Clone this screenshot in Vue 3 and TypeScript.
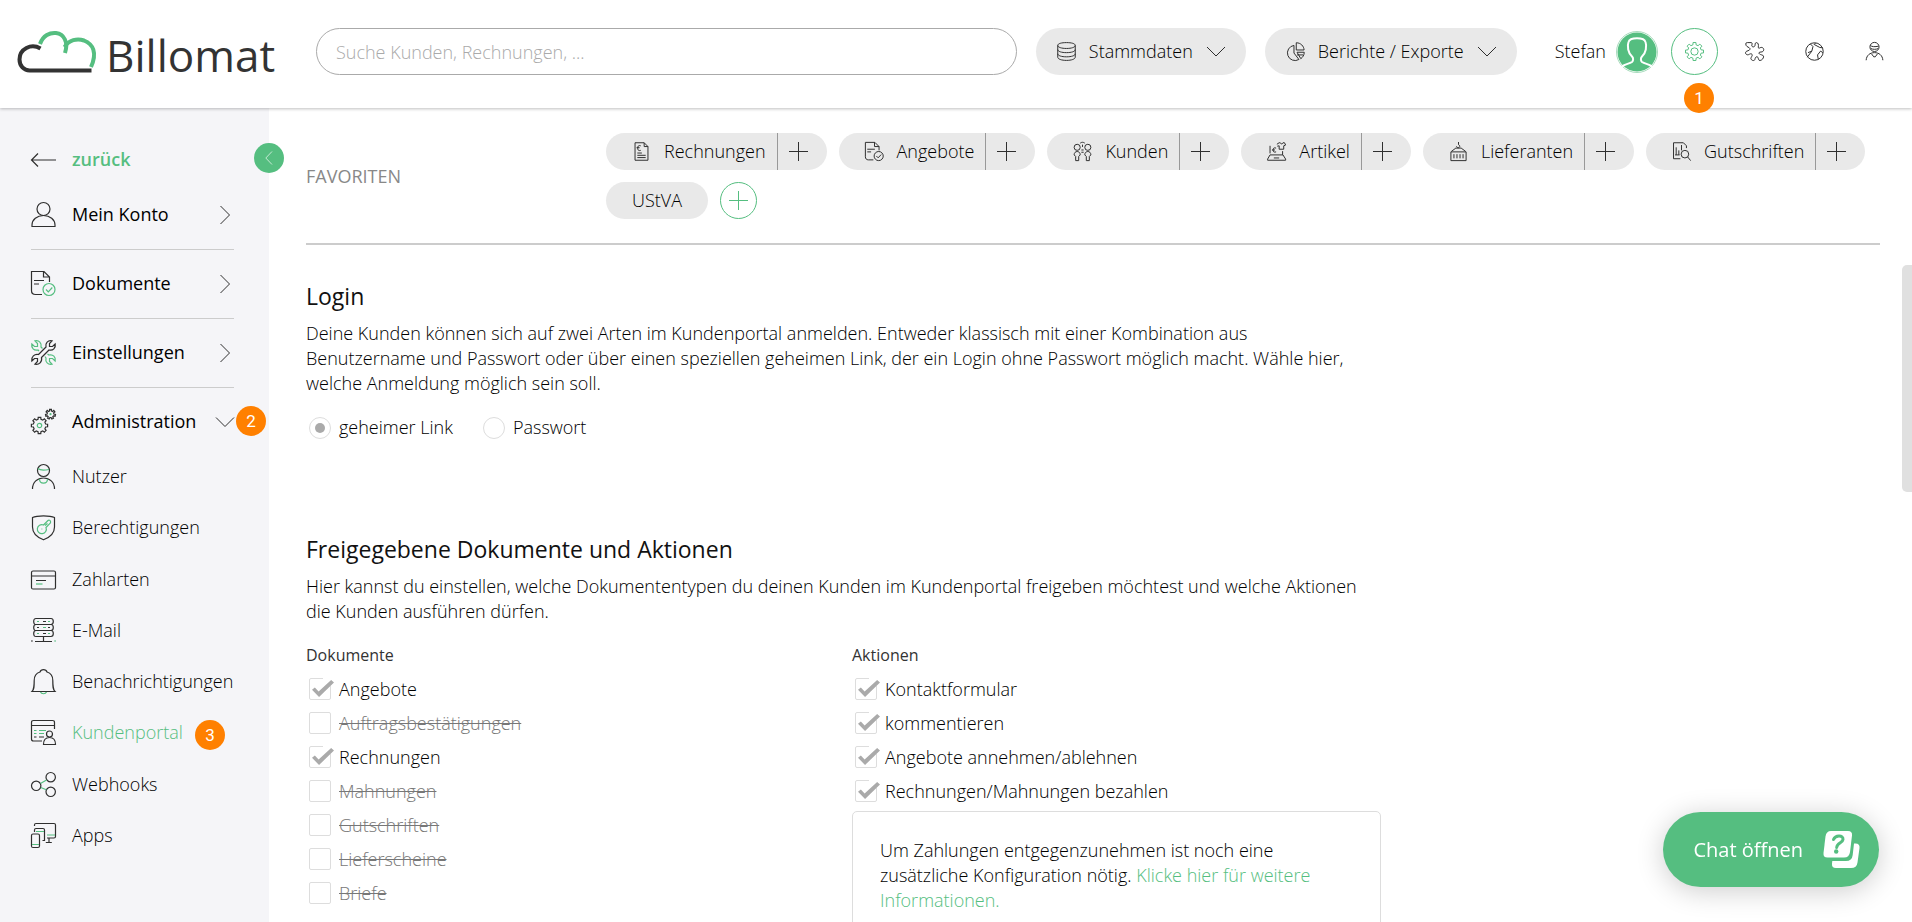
<script setup lang="ts">
import { ref } from 'vue'

interface Stroke {
  d: string
  accent?: boolean
}

interface NavItem {
  label: string
  icon: string
  marker?: number
}

/** Closed outline of a cog wheel around (cx, cy). */
function gear(cx: number, cy: number, inner: number, outer: number, teeth: number): string {
  const step = (Math.PI * 2) / teeth
  const at = (r: number, a: number) =>
    `${(cx + r * Math.sin(a)).toFixed(2)} ${(cy - r * Math.cos(a)).toFixed(2)}`
  const parts: string[] = []
  for (let i = 0; i < teeth; i++) {
    const a = i * step
    parts.push(
      `${i ? 'L' : 'M'}${at(outer, a - step * 0.2)}`,
      `L${at(outer, a + step * 0.2)}`,
      `L${at(inner, a + step * 0.3)}`,
      `L${at(inner, a + step * 0.7)}`,
    )
  }
  return parts.join('') + 'Z'
}

function circle(cx: number, cy: number, r: number): string {
  return `M${cx - r} ${cy}a${r} ${r} 0 1 0 ${2 * r} 0a${r} ${r} 0 1 0 ${-2 * r} 0Z`
}

const icons: Record<string, Stroke[]> = {
  back: [{ d: 'M.5 13H25M7 6.5.5 13 7 19.5' }],
  user: [
    { d: circle(12.5, 7, 6.5) },
    { d: 'M1 24.5v-1.5c0-5.500 5-9.500 11.500-9.500s11.500 4 11.500 9.500v1.500z' },
  ],
  docCheck: [
    { d: 'M18.500 11V6L13 .5H.5v19c0 2.500 1.500 4 4 4h6.500M12.500.5v5.500h6M3 9.500h10M3 13h5' },
    { d: circle(18, 18.5, 6) + 'M15 18.500l2.300 2.300 4-4.300', accent: true },
  ],
  tools: [
    { d: 'M7.500 14.500 15 7C14 3 17 0 21 .8L18.500 3.500v3h3L24.200 4C25 8 22 11 18 10l-7.500 7.500C11.500 22 8 25 4 24.200L6.500 21.500v-3h-3L.8 21C0 17 3.500 13.500 7.500 14.500Z' },
    { d: 'M8 11 7 10C3 11 0 8 .8 4l2.700 2.500h3v-3L4 .8C8 0 11 3 10 7l1.500 1.500', accent: true },
    { d: 'M16.500 14l1.500 1c4-1 7 2 6.200 6l-2.700-2.500h-3v3l2.500 2.700C17 25 14 22 15 18l-1-1.500', accent: true },
  ],
  gears: [
    { d: gear(8.5, 16.5, 6.3, 8.2, 8) + gear(19.5, 5.2, 3.4, 5, 7) },
    { d: circle(8.5, 16.5, 2.2) + circle(19.5, 5.2, 0.5), accent: true },
  ],
  person: [
    { d: circle(12.5, 6.5, 6) + 'M1.500 25c0-7 5-11 11-11s11 4 11 11' },
    { d: 'M7 4.500c2 2 6 2 11 1M8.500 15c0 5.500 8 5.500 8 0', accent: true },
  ],
  shield: [
    { d: 'M1.500 2.500C6 .3 19 .3 23.500 2.500V12c0 7-5 10.500-11 12.800C6.500 22.500 1.500 19 1.500 12Z' },
    { d: 'M12.500 10 17 5.500c.8-.8 2.500-.2 2.500.8v1.500L15 12.500a4.500 4.500 0 1 1-2.500-2.500ZM10.500 14h.8M14 10.500l2.500-2', accent: true },
  ],
  card: [
    { d: 'M2 4h21q1.500 0 1.500 1.500v15q0 1.500-1.500 1.500H2Q.5 22 .5 20.500v-15Q.5 4 2 4ZM.5 9h24M5 13.500h10' },
    { d: 'M5 17h6.500', accent: true },
  ],
  server: [
    { d: 'M5 .5h15q2.300 0 2.300 3t-2.300 3H5q-2.300 0-2.300-3T5 .5ZM5 6.500h15q2.300 0 2.300 3t-2.300 3H5q-2.300 0-2.300-3t2.300-3ZM5 12.500h15q2.300 0 2.300 3t-2.300 3H5q-2.300 0-2.300-3t2.300-3ZM12.500 18.500v5M4 23.500h17M0 23h1.800M12 3.500h3M6 9.500h2M17 9.500h2M12 15.500h3' },
    { d: 'M6 3.500h2M17 3.500h2M12 9.500h3M6 15.500h2M17 15.500h2M23.200 23H25', accent: true },
  ],
  bell: [
    { d: 'M1 22.500h23c-2-2-2.200-4-2.200-11 0-4.500-2.300-7.500-5.800-8.500C15-.2 10-.2 9 3 5.500 4 3.200 7 3.200 11.500c0 7-.2 9-2.200 11Z' },
    { d: 'M9.500 23c1 2.300 5 2.300 6 0', accent: true },
  ],
  portal: [
    { d: 'M23.500 9V2.500q0-2-2-2h-19q-2 0-2 2V19q0 2 2 2H11M.5 5.500h23M3 17h2.500M8 17h5' + circle(18.5, 14, 3) + 'M12.500 24.500c0-4.500 2.500-7 6-7s6 2.500 6 7Z' },
    { d: 'M3 10.500h2.500M8 10.500h7M3 13.500h2.500M8 13.500h5', accent: true },
  ],
  hooks: [
    { d: circle(5.2, 13.8, 4.7) + circle(19.7, 5.2, 4.7) + circle(19.7, 19.8, 4.7) },
    { d: 'M9.500 11.500l6-3.500M9.800 15.500l5.500 2.300', accent: true },
  ],
  apps: [
    { d: 'M3.500 3V2q0-1.500 1.500-1.500h18q1.500 0 1.500 1.500v11.500q0 1.500-1.500 1.500h-7M18 15v4.500M14.800 19.500h6M3.500 9V7q0-1.500 1.500-1.500h7q1.500 0 1.500 1.500v10.500h-2M2 11h5q1.500 0 1.500 1.500V23q0 1.500-1.500 1.500H2Q.5 24.500.5 23V12.500Q.5 11 2 11Z' },
    { d: 'M5 8.500h8M16 12h8M1 21.500h7', accent: true },
  ],
  database: [
    { d: 'M1 4.500C1 2 6 .8 12.500.8S24 2 24 4.500 19 8.500 12.500 8.500 1 7 1 4.500ZV20c0 2.500 5 4.200 11.500 4.200S24 22.500 24 20V4.500M1 10c0 2.500 5 4 11.500 4S24 12.500 24 10M1 15.500c0 2.500 5 4 11.500 4S24 18 24 15.500' },
  ],
  pie: [
    { d: 'M10.500 4.500A10 10 0 1 0 17 23l-6.500-8.500ZM13.500 1c6 0 10 4.500 10.300 9.500H13.500ZM14.500 13.500h9.500c0 4-2 6.500-4.500 8.500ZM14.500 17h8' },
  ],
  puzzle: [
    { d: 'M1 2.500Q1 .8 3 .8H8C9.800.8 9.500 2.500 9 4 8.300 6.500 12 7.500 13 5 13.500 3.500 13 .8 15 .8c2.500 0 3 3 2.500 5.700-.2 2 1 2 2.500 1 3-1.500 6 1.500 4 4.500-1.500 2-4.500.5-5.500 2-.7 1.500 1.500 2.500 3.500 3 2.500.5 3 2 2 4-1 2.500-4 4-5.500 3-1.500-1.500-.5-4-2.500-4.500-2.500-.5-2.500 2-3 3.500-.5 1.800-3 1.800-4.500.3-2-1.500.5-3.800 1-5.800.3-2-2-2.500-3.500-1.500-1.500 1-3.500 1.500-5-.5-1-2 .5-3.500 3-4C6.500 11 7.500 8.500 5.500 7.500 3.500 6.500 1 5.500 1 2.500Z' },
  ],
  ball: [
    { d: circle(12.5, 12.5, 11.5) + 'M7 2.500 10.500 6 9 12l-6 8M4 14l5-2M14 1.200l-2 2 7.500 4 4 .5M23.500 14l-3-2-4 5 1 6' },
  ],
  headband: [
    { d: circle(12.5, 6.5, 6) + 'M7 4.500c2 2 6 2 11 1M7.500 8.500c3 1.500 7 1.500 10 0M1.500 24c.5-6.500 5-10 11-10s10.500 3.500 11 10M8.500 15.500l3 4h2l3-4' },
  ],
  cog: [{ d: gear(12.5, 12.5, 9, 12, 8) + circle(12.5, 12.5, 4.8) }],
  invoice: [
    { d: 'M4 1h12l5 5v18H4ZM16 1v5h5M11.500 5C8.500 4 7.500 5.500 7.500 8s1 4 4 3M6 7.500h4M7 14.500h6M7 17.500h11M7 20.500h11' },
  ],
  people: [
    { d: circle(5.5, 7, 4) + circle(19.5, 7, 4) + 'M1.500 17c0-6 8-6 8 0l-2 2v5.500h-4V19ZM15.500 17c0-6 8-6 8 0l-2 2v5.500h-4V19ZM9.500 1.500c2-1.500 4-1.500 6 0M12.500 3.500v3M11 10.500h3M14 13.500h-3' },
  ],
  article: [
    { d: 'M4 15V5M4 17h17l3.500 5.500V24H.8v-1.500ZM9 21h7M12 8c-3-1-4 .5-4 2.500s1 3.500 4 2.500M6.500 10.500h4M13 3l3-2h1.500c.5 2 3 2 3.500 0H23l1.500 3-2.500 1v4.500h-6V5l-2.500.5M20.500 17v-5' },
  ],
  crate: [
    { d: 'M2.500 13h20v11.500h-20ZM6.500 16v5.500M10.500 16v5.500M14.500 16v5.500M18.500 16v5.500M3 12.500l6-4.500h7l6 4.500M12.500 0v3.500c2.500 1 2 4-.5 4-1.200 0-2-.8-2-2' },
  ],
  credit: [
    { d: 'M19 8V5l-4-4H2v21h9M5.500 7v10M9 11v6M12.500 4v7M4 17h6' + circle(17, 16, 5) + 'M20.500 19.500l4 5' },
  ],
}

const mainNav: NavItem[] = [
  { label: 'Mein Konto', icon: 'user' },
  { label: 'Dokumente', icon: 'docCheck' },
  { label: 'Einstellungen', icon: 'tools' },
  { label: 'Administration', icon: 'gears', marker: 2 },
]

const subNav: NavItem[] = [
  { label: 'Nutzer', icon: 'person' },
  { label: 'Berechtigungen', icon: 'shield' },
  { label: 'Zahlarten', icon: 'card' },
  { label: 'E-Mail', icon: 'server' },
  { label: 'Benachrichtigungen', icon: 'bell' },
  { label: 'Kundenportal', icon: 'portal', marker: 3 },
  { label: 'Webhooks', icon: 'hooks' },
  { label: 'Apps', icon: 'apps' },
]

const favourites: NavItem[] = [
  { label: 'Rechnungen', icon: 'invoice' },
  { label: 'Angebote', icon: 'docCheck' },
  { label: 'Kunden', icon: 'people' },
  { label: 'Artikel', icon: 'article' },
  { label: 'Lieferanten', icon: 'crate' },
  { label: 'Gutschriften', icon: 'credit' },
]

const headerMenus = [
  { label: 'Stammdaten', icon: 'database' },
  { label: 'Berichte / Exporte', icon: 'pie' },
]

const headerTools = [
  { label: 'Einstellungen', icon: 'cog', marker: 1 },
  { label: 'Erweiterungen', icon: 'puzzle' },
  { label: 'Neuigkeiten', icon: 'ball' },
  { label: 'Profil', icon: 'headband' },
]

const search = ref('')
const loginMode = ref('link')

const documents = ref([
  { label: 'Angebote', on: true },
  { label: 'Auftragsbestätigungen', on: false },
  { label: 'Rechnungen', on: true },
  { label: 'Mahnungen', on: false },
  { label: 'Gutschriften', on: false },
  { label: 'Lieferscheine', on: false },
  { label: 'Briefe', on: false },
])

const actions = ref([
  { label: 'Kontaktformular', on: true },
  { label: 'kommentieren', on: true },
  { label: 'Angebote annehmen/ablehnen', on: true },
  { label: 'Rechnungen/Mahnungen bezahlen', on: true },
])
</script>

<template>
  <div class="app">
    <header class="topbar">
      <a href="#" class="logo" aria-label="Billomat">
        <svg class="cloud" viewBox="0 0 80 44" fill="none" stroke-width="4">
          <path class="cloud-dark" d="M23.500 18.500C14 13 2.500 19 2.500 29.500 2.500 36 7 40.500 12.500 40.500H74.500" />
          <path class="cloud-green" d="M23 14C26 5.500 33 2.300 39 3c8 1 12.500 9 9 20" />
          <path class="cloud-green" d="M47.500 17C52 10 60 8 67 10.500c9 3.500 13.500 12 7 26.500" />
        </svg>
        <span class="logo-text">Billomat</span>
      </a>

      <input v-model="search" class="search" type="search" aria-label="Suche" placeholder="Suche Kunden, Rechnungen, ..." />

      <button v-for="menu in headerMenus" :key="menu.label" type="button" class="menu-pill">
        <svg class="icon-s" viewBox="0 0 25 25">
          <path v-for="(s, i) in icons[menu.icon]" :key="i" :d="s.d" />
        </svg>
        <span>{{ menu.label }}</span>
        <svg class="chevron-wide" viewBox="0 0 20 12"><path d="M1 1l9 9 9-9" /></svg>
      </button>

      <div class="account">
        <span>Stefan</span>
        <svg class="avatar" viewBox="0 0 42 42">
          <circle class="avatar-ring" cx="21" cy="21" r="20.5" />
          <circle class="avatar-disc" cx="21" cy="21" r="19.5" />
          <path class="avatar-line" d="M6 35.500c3-2.500 7-2.500 10-4.500 1.500-1.200 1.500-4 0-5.500C12 22 11 15 12.500 11 14 6 28 6 29.500 11c1.500 4 .5 11-3.500 14.500-1.500 1.500-1.500 4.300 0 5.500 3 2 7 2 10 4.500" />
        </svg>
      </div>

      <nav class="tools" aria-label="Werkzeuge">
        <button
          v-for="tool in headerTools"
          :key="tool.label"
          type="button"
          class="tool"
          :class="{ active: tool.marker }"
          :aria-label="tool.label"
        >
          <svg class="icon-s" viewBox="0 0 25 25">
            <path v-for="(s, i) in icons[tool.icon]" :key="i" :d="s.d" />
          </svg>
          <span v-if="tool.marker" class="marker marker-tool">{{ tool.marker }}</span>
        </button>
      </nav>
    </header>

    <div class="body">
      <aside class="sidebar">
        <button type="button" class="collapse" aria-label="Menü einklappen">
          <svg viewBox="0 0 8 14"><path d="M7 .5.800 7 7 13.500" /></svg>
        </button>

        <a href="#" class="nav-link back">
          <svg class="icon" viewBox="0 0 25 25"><path :d="icons.back[0].d" /></svg>
          <span>zurück</span>
        </a>

        <ul class="main-nav">
          <li v-for="item in mainNav" :key="item.label">
            <a href="#" class="nav-link">
              <svg class="icon" viewBox="0 0 25 25">
                <path v-for="(s, i) in icons[item.icon]" :key="i" :d="s.d" :class="{ accent: s.accent }" />
              </svg>
              <span>{{ item.label }}</span>
              <svg class="chevron" :class="{ open: item.marker }" viewBox="0 0 10 20"><path d="M.5 1l9 9-9 9" /></svg>
            </a>
            <span v-if="item.marker" class="marker marker-main">{{ item.marker }}</span>
          </li>
        </ul>

        <ul class="sub-nav">
          <li v-for="item in subNav" :key="item.label">
            <a href="#" class="nav-link" :class="{ current: item.marker }">
              <svg class="icon" viewBox="0 0 25 25">
                <path v-for="(s, i) in icons[item.icon]" :key="i" :d="s.d" :class="{ accent: s.accent }" />
              </svg>
              <span>{{ item.label }}</span>
            </a>
            <span v-if="item.marker" class="marker marker-sub">{{ item.marker }}</span>
          </li>
        </ul>
      </aside>

      <main class="content">
        <section class="favourites">
          <h2 class="fav-title">FAVORITEN</h2>
          <div class="fav-list">
            <div v-for="fav in favourites" :key="fav.label" class="fav">
              <a href="#" class="fav-link">
                <svg class="icon-s" viewBox="0 0 25 25">
                  <path v-for="(s, i) in icons[fav.icon]" :key="i" :d="s.d" />
                </svg>
                <span>{{ fav.label }}</span>
              </a>
              <button type="button" class="fav-add" :aria-label="fav.label + ' anlegen'">
                <svg viewBox="0 0 19 19"><path d="M9.500 0v19M0 9.500h19" /></svg>
              </button>
            </div>
            <div class="fav"><a href="#" class="fav-link plain">UStVA</a></div>
            <button type="button" class="fav-new" aria-label="Favorit hinzufügen">
              <svg viewBox="0 0 19 19"><path d="M9.500 0v19M0 9.500h19" /></svg>
            </button>
          </div>
        </section>

        <section class="block login">
          <h1>Login</h1>
          <p>
            Deine Kunden können sich auf zwei Arten im Kundenportal anmelden. Entweder klassisch mit einer
            Kombination aus Benutzername und Passwort oder über einen speziellen geheimen Link, der ein Login
            ohne Passwort möglich macht. Wähle hier, welche Anmeldung möglich sein soll.
          </p>
          <div class="radios">
            <label><input v-model="loginMode" type="radio" name="login" value="link" />geheimer Link</label>
            <label><input v-model="loginMode" type="radio" name="login" value="password" />Passwort</label>
          </div>
        </section>

        <section class="block">
          <h1>Freigegebene Dokumente und Aktionen</h1>
          <p>
            Hier kannst du einstellen, welche Dokumententypen du deinen Kunden im Kundenportal freigeben
            möchtest und welche Aktionen die Kunden ausführen dürfen.
          </p>
          <div class="columns">
            <fieldset>
              <legend>Dokumente</legend>
              <label v-for="doc in documents" :key="doc.label" class="check" :class="{ off: !doc.on }">
                <input v-model="doc.on" type="checkbox" /><span>{{ doc.label }}</span>
              </label>
            </fieldset>
            <fieldset>
              <legend>Aktionen</legend>
              <label v-for="act in actions" :key="act.label" class="check" :class="{ off: !act.on }">
                <input v-model="act.on" type="checkbox" /><span>{{ act.label }}</span>
              </label>
              <div class="notice">
                Um Zahlungen entgegenzunehmen ist noch eine zusätzliche Konfiguration nötig.
                <a href="#">Klicke hier für weitere Informationen.</a>
              </div>
            </fieldset>
          </div>
        </section>
        <div class="scroll-thumb"></div>
      </main>
    </div>

    <button type="button" class="chat">
      <span>Chat öffnen</span>
      <svg viewBox="0 0 38 38">
        <path class="chat-back" d="M31 12.500h1.500q4.500 0 4 4.500l-2 14.500q-.7 5.500-6.500 5.500H13q-4.500 0-4-4.500l.3-2.500H23q6 0 6.700-6Z" />
        <path class="chat-front" d="M8 0h17q4.500 0 4 4.500l-2 16.500q-.7 5.500-6 5.500H4.500Q0 26.500.500 22L2.500 5.500Q3.200 0 8 0Z" />
        <path class="chat-mark" d="M10.500 8.500C12.500 3.500 20.500 4 20 8.500c-.4 3.500-6 3-6.300 8" />
        <circle class="chat-dot" cx="13.200" cy="20.500" r="2.200" />
      </svg>
    </button>
  </div>
</template>

<style>
html,
body {
  margin: 0;
  background: #fff;
}
</style>

<style scoped>
.app {
  --green: #55be80;
  --line: #2f2f2f;
  display: flex;
  flex-direction: column;
  height: 100vh;
  overflow: hidden;
  font-family: 'Open Sans', 'Noto Sans', sans-serif;
  font-size: 18px;
  font-weight: 300;
  line-height: 25px;
  color: #000;
}
* {
  box-sizing: border-box;
}
a {
  color: inherit;
  text-decoration: none;
}
button,
input {
  font: inherit;
  color: inherit;
}
button {
  padding: 0;
  border: 0;
  background: none;
  cursor: pointer;
}
ul {
  margin: 0;
  padding: 0;
  list-style: none;
}
svg {
  flex: none;
  fill: none;
  stroke: var(--line);
  overflow: visible;
}

/* header */
.topbar {
  position: relative;
  z-index: 2;
  display: flex;
  flex: none;
  align-items: center;
  height: 108px;
  padding: 0 14px 5px 17px;
  background: #fff;
  box-shadow: 0 1px 3px rgba(0, 0, 0, 0.25);
}
.logo {
  display: flex;
  align-items: center;
  width: 299px;
  color: #333;
}
.cloud {
  width: 80px;
  height: 44px;
}
.cloud-dark {
  stroke: #333;
}
.cloud-green {
  stroke: var(--green);
}
.logo-text {
  margin-left: 9px;
  padding-top: 6px;
  font-size: 44px;
  font-weight: 400;
  line-height: 48px;
}
.search {
  flex: 1;
  min-width: 0;
  height: 47px;
  padding: 0 19px;
  border: 1px solid #aaa;
  border-radius: 24px;
  background: #fff;
  outline: none;
  appearance: none;
}
.search::placeholder {
  color: #aaa;
  opacity: 1;
}
.menu-pill {
  display: flex;
  align-items: center;
  height: 47px;
  margin-left: 19px;
  padding: 0 20px 0 21px;
  border-radius: 24px;
  background: #e9e9e9;
}
.menu-pill span {
  margin: 0 13px;
}
.icon-s {
  width: 19px;
  height: 19px;
  stroke-width: 1.3;
}
.chevron-wide {
  width: 20px;
  height: 12px;
}
.account {
  display: flex;
  align-items: center;
  gap: 10px;
  margin-left: 38px;
}
.avatar {
  width: 42px;
  height: 42px;
}
.avatar-ring {
  stroke: #a8dcbd;
}
.avatar-disc {
  fill: var(--green);
  stroke: none;
}
.avatar-line {
  stroke: #fff;
  stroke-width: 2;
}
.tools {
  display: flex;
  gap: 13px;
  margin-left: 13px;
}
.tool {
  position: relative;
  display: flex;
  align-items: center;
  justify-content: center;
  width: 47px;
  height: 47px;
  border-radius: 50%;
}
.tool.active {
  border: 1px solid var(--green);
}
.tool.active svg {
  stroke: var(--green);
}
.marker {
  position: absolute;
  width: 30px;
  height: 30px;
  border-radius: 50%;
  background: #ff8000;
  color: #fff;
  font-family: Roboto, 'Liberation Sans', sans-serif;
  font-size: 17px;
  font-weight: 400;
  line-height: 30px;
  text-align: center;
}
.marker-tool {
  top: 54px;
  left: 12px;
}
.marker-main {
  top: -3px;
  right: -32px;
}
.marker-sub {
  top: 13px;
  left: 164px;
}

/* sidebar */
.body {
  display: flex;
  flex: 1;
  min-height: 0;
}
.sidebar {
  position: relative;
  flex: none;
  width: 269px;
  padding: 39px 35px 0 31px;
  background: #f5f5f8;
}
.collapse {
  position: absolute;
  top: 35px;
  right: -15px;
  width: 30px;
  height: 30px;
  border-radius: 50%;
  background: var(--green);
}
.collapse svg {
  width: 8px;
  height: 14px;
  stroke: #c5e9d3;
}
.nav-link {
  display: flex;
  align-items: center;
  gap: 16px;
}
.icon {
  width: 25px;
  height: 25px;
  stroke-width: 1.2;
}
.icon .accent {
  stroke: var(--green);
}
.back {
  color: var(--green);
  font-weight: 600;
}
.main-nav {
  margin-top: 30px;
  font-weight: 500;
}
.main-nav li {
  position: relative;
  padding-bottom: 22px;
  margin-bottom: 21px;
  border-bottom: 1px solid #ccc;
}
.main-nav li:last-child {
  padding: 0;
  margin: 0;
  border: 0;
}
.chevron {
  width: 10px;
  height: 20px;
  margin-left: auto;
  margin-right: 4px;
}
.chevron.open {
  transform: rotate(90deg);
}
.sub-nav {
  display: grid;
  grid-auto-rows: 1fr;
  min-height: 410px;
  margin-top: 17px;
}
.sub-nav li {
  position: relative;
  display: flex;
  align-items: center;
}
.current {
  color: var(--green);
}

/* content */
.content {
  position: relative;
  flex: 1;
  min-width: 0;
  padding: 25px 32px 0 37px;
  overflow: hidden;
}
.favourites {
  display: flex;
  align-items: center;
  padding-bottom: 24px;
  border-bottom: 2px solid #ccc;
}
.fav-title {
  flex: none;
  width: 300px;
  margin: 0;
  font-size: 18px;
  font-weight: 400;
  color: #888;
}
.fav-list {
  display: flex;
  flex-wrap: wrap;
  gap: 12px;
}
.fav {
  display: flex;
  height: 37px;
  border-radius: 19px;
  background: #e9e9e9;
}
.fav-link {
  display: flex;
  align-items: center;
  gap: 13px;
  padding: 0 11px 0 26px;
}
.fav-link.plain {
  padding: 0 26px;
}
.fav-add {
  display: flex;
  align-items: center;
  width: 50px;
  padding-left: 11px;
  border-left: 1px solid #999;
}
.fav-add svg,
.fav-new svg {
  width: 19px;
  height: 19px;
}
.fav-new {
  display: flex;
  align-items: center;
  justify-content: center;
  width: 37px;
  height: 37px;
  border: 1px solid var(--green);
  border-radius: 50%;
}
.fav-new svg {
  stroke: var(--green);
}
.block {
  max-width: 1075px;
}
h1 {
  margin: 0;
  font-size: 23px;
  font-weight: 400;
  line-height: 32px;
  color: #111;
}
p {
  max-width: 1058px;
  margin: 9px 0 0;
}
.login {
  margin-top: 35px;
  margin-bottom: 93px;
}
.radios {
  display: flex;
  gap: 30px;
  margin-top: 19px;
  padding-left: 3px;
}
.radios label,
.check {
  display: flex;
  align-items: center;
  gap: 8px;
}
.radios input,
.check input {
  position: relative;
  flex: none;
  width: 22px;
  height: 22px;
  margin: 0;
  border: 1px solid #ddd;
  background: #fff;
  appearance: none;
}
.radios input {
  border-radius: 50%;
}
.radios input:checked::after {
  content: '';
  position: absolute;
  inset: 5px;
  border-radius: 50%;
  background: #aaa;
}
.columns {
  display: grid;
  grid-template-columns: 1fr 1fr;
  gap: 17px;
  margin-top: 19px;
}
fieldset {
  min-width: 0;
  margin: 0;
  padding: 0;
  border: 0;
}
legend {
  padding: 0;
  margin-bottom: 4px;
  font-size: 16px;
  font-weight: 400;
  color: #333;
}
.check {
  height: 34px;
  padding-left: 3px;
}
.check input {
  border-radius: 2px;
}
.check input:checked::before,
.check input:checked::after {
  content: '';
  position: absolute;
}
.check input:checked::before {
  top: -1px;
  right: -1px;
  width: 8px;
  height: 8px;
  background: #fff;
}
.check input:checked::after {
  top: 1px;
  left: 2px;
  width: 22px;
  height: 17px;
  background: #aaa;
  clip-path: polygon(0 58%, 13% 44%, 30% 68%, 87% 0, 100% 14%, 32% 100%);
}
.off {
  color: #777;
}
.off span {
  text-decoration: line-through;
}
.notice {
  margin-top: 3px;
  padding: 26px 27px 40px;
  border: 1px solid #ddd;
  border-radius: 5px;
}
.notice a {
  color: var(--green);
}
.scroll-thumb {
  position: absolute;
  top: 157px;
  right: 0;
  width: 10px;
  height: 227px;
  border-radius: 5px 0 0 5px;
  background: #e0e0e0;
}

/* chat button */
.chat {
  position: fixed;
  right: 33px;
  bottom: 35px;
  z-index: 3;
  display: flex;
  align-items: center;
  gap: 20px;
  height: 75px;
  padding: 0 18px 0 30px;
  border-radius: 38px;
  background: var(--green);
  box-shadow: 0 4px 28px rgba(0, 0, 0, 0.2);
  color: #fff;
  font-weight: 500;
  font-size: 20px;
}
.chat svg {
  width: 38px;
  height: 38px;
  stroke: none;
}
.chat-back,
.chat-front {
  fill: #fff;
}
.chat-mark {
  stroke: var(--green);
  stroke-width: 3;
  stroke-linecap: round;
}
.chat-dot {
  fill: var(--green);
}
</style>
